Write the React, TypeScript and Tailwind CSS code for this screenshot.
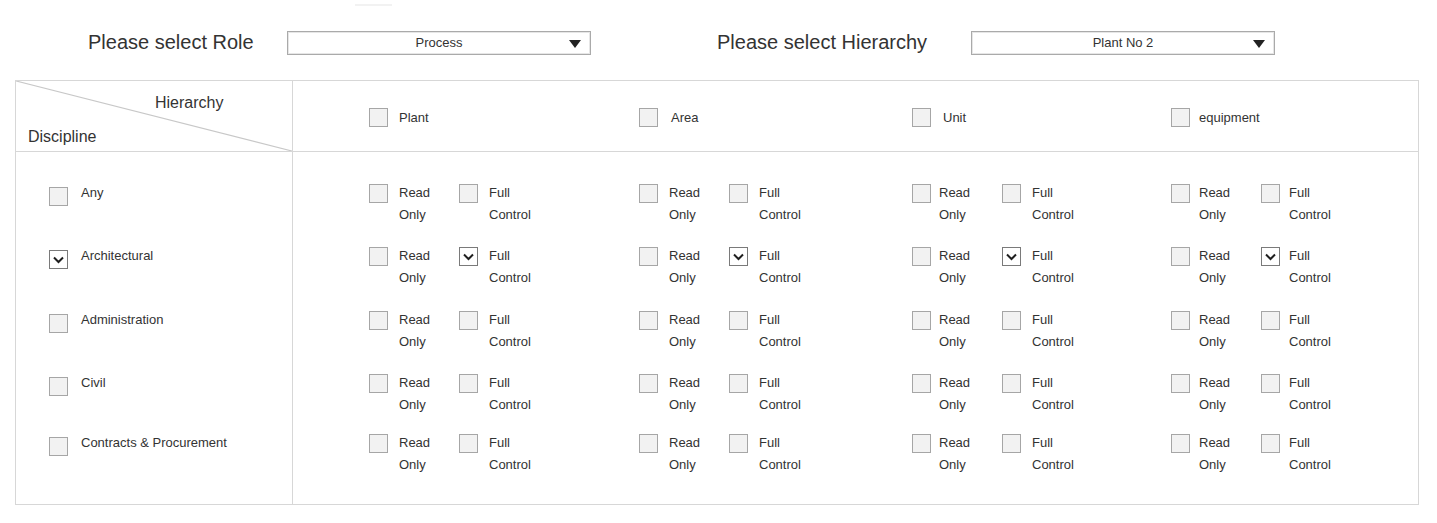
import React from "react";

const font = { fontFamily: '"Liberation Sans", Arial, sans-serif' };

function Box({ checked = false, className = "" }: { checked?: boolean; className?: string }) {
  return (
    <div
      className={`w-[19px] h-[19px] shrink-0 border flex items-center justify-center ${
        checked ? "bg-white border-[#7a7a7a]" : "bg-[#f2f2f2] border-[#a6a6a6]"
      } ${className}`}
    >
      {checked && (
        <svg width="13" height="13" viewBox="0 0 13 13">
          <path d="M2 4.5 L6.5 9 L11 4.5" fill="none" stroke="#1f1f1f" strokeWidth="2" />
        </svg>
      )}
    </div>
  );
}

function Dropdown({ value }: { value: string }) {
  return (
    <div className="relative w-[304px] h-[24px] border border-[#aaaaaa] bg-white shadow-[inset_0_0_0_1px_#e6e6e6] flex items-center justify-center text-[13px] text-[#333]">
      <span>{value}</span>
      <svg className="absolute right-[9px] top-[8px]" width="12" height="8" viewBox="0 0 12 8">
        <path d="M0 0 H12 L6 8 Z" fill="#222" />
      </svg>
    </div>
  );
}

// per-column spacing, the mockup isn't perfectly regular
const cols = [
  { name: "Plant", head: "ml-[11px]", read: "ml-[11px] w-[60px]", full: "ml-[11px]" },
  { name: "Area", head: "ml-[13px]", read: "ml-[11px] w-[60px]", full: "ml-[11px]" },
  { name: "Unit", head: "ml-[12px]", read: "ml-[8px] w-[63px]", full: "ml-[11px]" },
  { name: "equipment", head: "ml-[9px]", read: "ml-[9px] w-[62px]", full: "ml-[9px]" },
];
const rows = [
  { name: "Any", checked: false, h: "h-[63px]" },
  { name: "Architectural", checked: true, h: "h-[64px]" },
  { name: "Administration", checked: false, h: "h-[63px]" },
  { name: "Civil", checked: false, h: "h-[60px]" },
  { name: "Contracts & Procurement", checked: false, h: "h-[60px]" },
];

const colGrid = "grid grid-cols-[270px_273px_259px_1fr]";

function Perm({ checked, col }: { checked: boolean; col: (typeof cols)[number] }) {
  return (
    <div className="flex text-[13px] leading-[22px] text-[#333]">
      <Box className="mt-[2px]" />
      <div className={col.read}>
        <div>Read</div>
        <div>Only</div>
      </div>
      <Box checked={checked} className="mt-[2px]" />
      <div className={col.full}>
        <div>Full</div>
        <div>Control</div>
      </div>
    </div>
  );
}

export default function App() {
  return (
    <div className="w-[1437px] h-[523px] bg-white overflow-hidden" style={font}>
      <div className="ml-[355px] mt-[4px] w-[37px] h-[2px] bg-[#f2f2f2]" />

      {/* selectors */}
      <div className="flex items-center mt-[25px] h-[24px]">
        <div className="ml-[88px] w-[199px] text-[20px] text-[#333] -mt-[2px]">Please select Role</div>
        <Dropdown value="Process" />
        <div className="ml-[126px] w-[254px] text-[20px] text-[#333] -mt-[2px]">Please select Hierarchy</div>
        <Dropdown value="Plant No 2" />
      </div>

      {/* table */}
      <div className="ml-[15px] mt-[25px] w-[1404px] h-[425px] border border-[#d7d7d7] flex flex-col">
        <div className="flex h-[71px] border-b border-[#d7d7d7] shrink-0">
          <div className="relative w-[277px] border-r border-[#d7d7d7] text-[16px] text-[#333]">
            <svg className="absolute left-0 top-0" width="276" height="70" viewBox="0 0 276 70">
              <line x1="0" y1="0" x2="276" y2="70" stroke="#c8c8c8" strokeWidth="1.2" />
            </svg>
            <div className="absolute left-[139px] top-[10px]">Hierarchy</div>
            <div className="absolute left-[12px] top-[44px]">Discipline</div>
          </div>
          <div className={`flex-1 pl-[76px] ${colGrid} items-center`}>
            {cols.map((c) => (
              <div key={c.name} className="flex items-center text-[13px] text-[#333] mt-[3px]">
                <Box />
                <span className={c.head}>{c.name}</span>
              </div>
            ))}
          </div>
        </div>

        <div className="flex flex-1">
          <div className="w-[277px] border-r border-[#d7d7d7] pt-[30px]">
            {rows.map((r) => (
              <div key={r.name} className={`${r.h} flex pl-[33px] text-[13px] leading-[22px] text-[#333]`}>
                <Box checked={r.checked} className="mt-[5px]" />
                <span className="ml-[13px]">{r.name}</span>
              </div>
            ))}
          </div>
          <div className="flex-1 pl-[76px] pt-[30px]">
            {rows.map((r) => (
              <div key={r.name} className={`${r.h} ${colGrid}`}>
                {cols.map((c) => (
                  <Perm key={c.name} col={c} checked={r.checked} />
                ))}
              </div>
            ))}
          </div>
        </div>
      </div>
    </div>
  );
}
